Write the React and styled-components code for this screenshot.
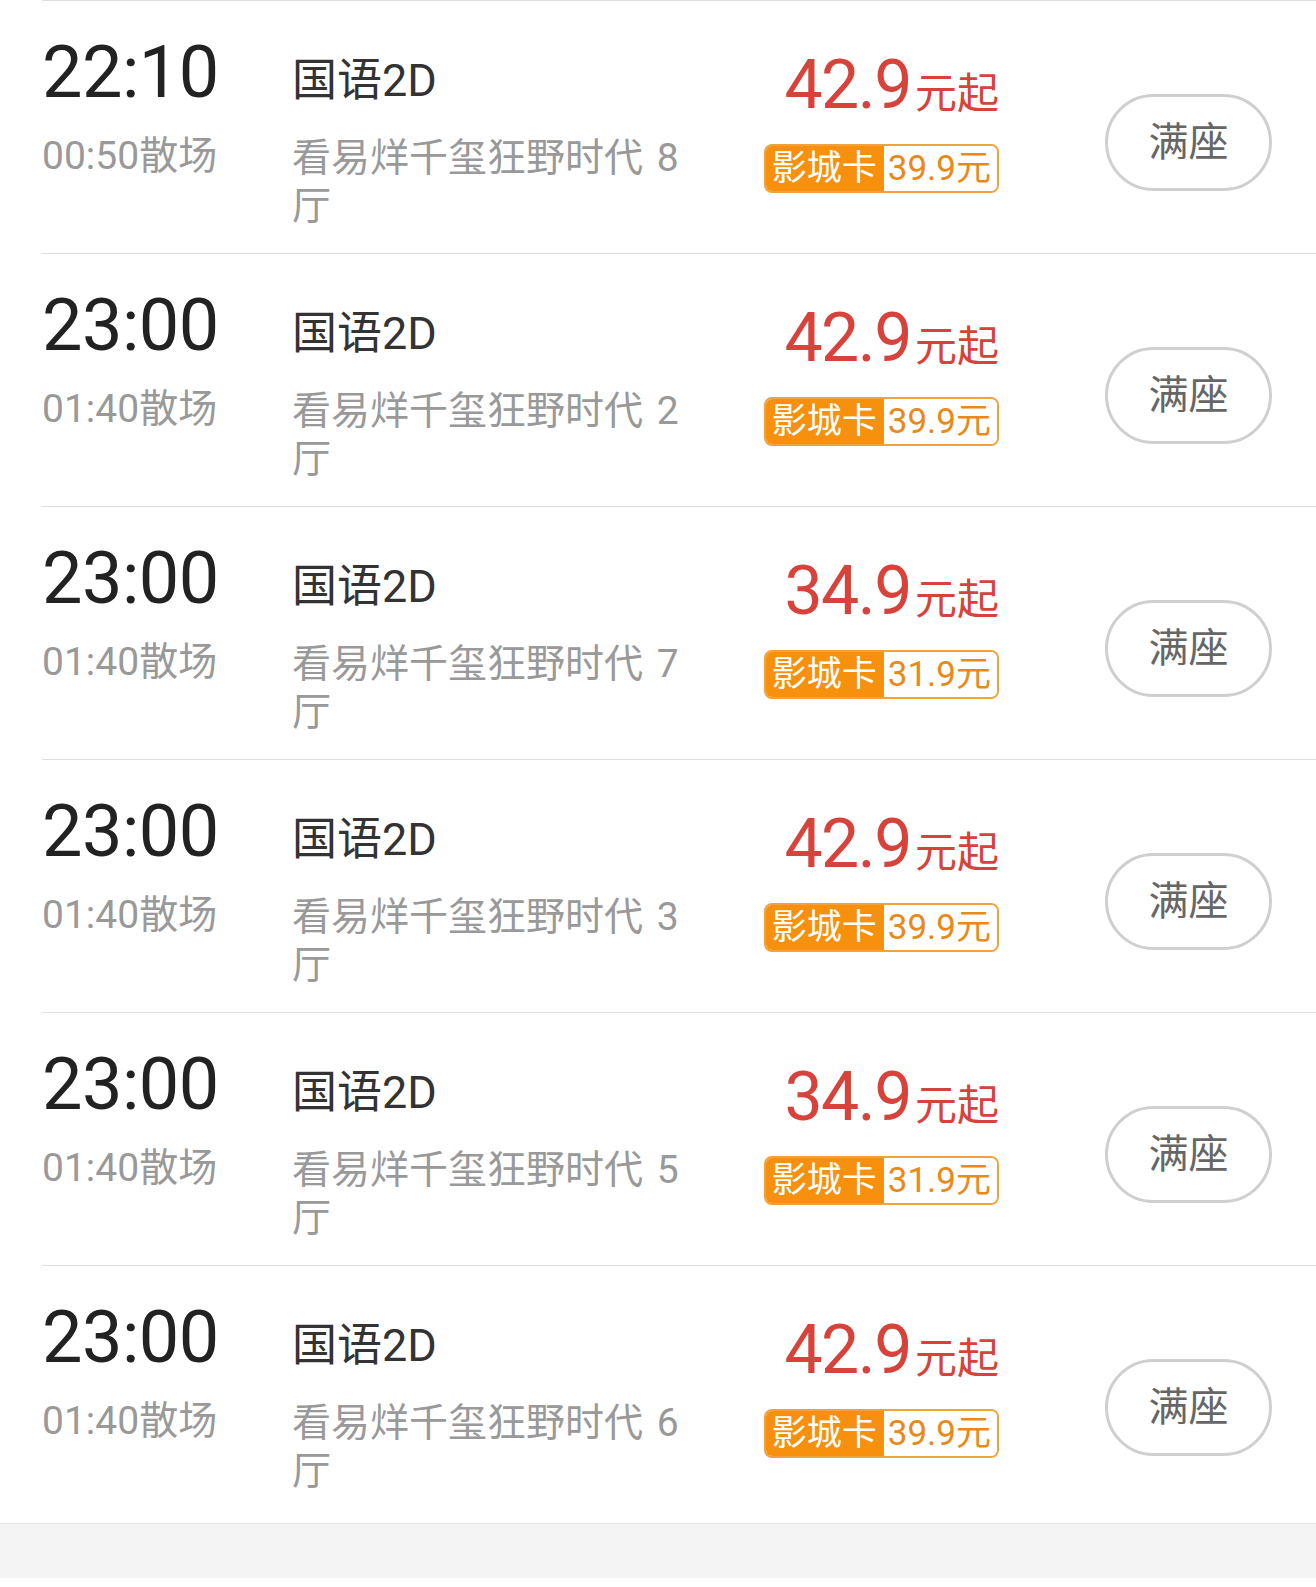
import styled, { createGlobalStyle } from 'styled-components';

const GlobalStyle = createGlobalStyle`
  html, body {
    margin: 0;
    padding: 0;
    background: #fff;
  }
  body {
    font-family: Roboto, 'Noto Sans CJK SC', sans-serif;
    -webkit-font-smoothing: antialiased;
  }
`;

const shows = [
  { start: '22:10', end: '00:50', hall: 8, price: '42.9', card: '39.9' },
  { start: '23:00', end: '01:40', hall: 2, price: '42.9', card: '39.9' },
  { start: '23:00', end: '01:40', hall: 7, price: '34.9', card: '31.9' },
  { start: '23:00', end: '01:40', hall: 3, price: '42.9', card: '39.9' },
  { start: '23:00', end: '01:40', hall: 5, price: '34.9', card: '31.9' },
  { start: '23:00', end: '01:40', hall: 6, price: '42.9', card: '39.9' },
];

const Page = styled.div`
  width: 1316px;
  background: #fff;
`;

const List = styled.ul`
  margin: 0;
  padding: 0;
  list-style: none;
`;

/* 场次 한 줄 */
const Row = styled.li`
  display: flex;
  align-items: flex-start;
  box-sizing: border-box;
  height: ${(p) => (p.$last ? '258px' : '253px')};
  margin-left: 42px;
  padding-top: 36px;
  border-top: 1px solid #dedede;
`;

const TimeCol = styled.div`
  display: flex;
  flex-direction: column;
  width: 250px;
  flex-shrink: 0;
`;

const StartTime = styled.div`
  font: 400 72px/72px Roboto, 'Noto Sans CJK SC', sans-serif;
  letter-spacing: -0.5px;
  color: #222;
`;

const EndTime = styled.div`
  margin-top: 24px;
  font: 400 39px/46px Roboto, 'Noto Sans CJK SC', sans-serif;
  color: #999;
`;

const InfoCol = styled.div`
  display: flex;
  flex-direction: column;
  width: 395px;
  flex-shrink: 0;
  padding-top: 18px;
`;

const Lang = styled.div`
  font: 400 45px/52px Roboto, 'Noto Sans CJK SC', sans-serif;
  color: #333;
`;

const Hall = styled.div`
  margin-top: 27px;
  font: 400 39px/48px Roboto, 'Noto Sans CJK SC', sans-serif;
  color: #999;
  .no {
    margin-left: 4px;
  }
`;

const PriceCol = styled.div`
  display: flex;
  flex: 1;
  flex-direction: column;
  align-items: flex-end;
  padding-top: 14px;
`;

const Price = styled.div`
  font: 400 68px/68px Roboto, 'Noto Sans CJK SC', sans-serif;
  color: #d7423b;
  white-space: nowrap;
  .num {
    letter-spacing: -1.5px;
  }
  .unit {
    margin-left: 4px;
    font-size: 42px;
    line-height: 1;
  }
`;

const Badge = styled.div`
  display: flex;
  box-sizing: border-box;
  height: 49px;
  margin-top: 25px;
  border: 2px solid #f2a23c;
  border-radius: 8px;
  overflow: hidden;
  font: 400 35px/45px Roboto, 'Noto Sans CJK SC', sans-serif;
  white-space: nowrap;
`;

const BadgeLabel = styled.span`
  padding: 0 7px 0 6px;
  background: #f7900c;
  color: #fff;
`;

const BadgeValue = styled.span`
  padding: 0 6px 0 4px;
  background: #fff;
  color: #e8891a;
`;

const FullButton = styled.button`
  flex-shrink: 0;
  box-sizing: border-box;
  width: 167px;
  height: 97px;
  margin: 57px 44px 0 106px;
  padding: 0;
  border: 3px solid #cfcfcf;
  border-radius: 50px;
  background: #fff;
  font: 400 40px/1 Roboto, 'Noto Sans CJK SC', sans-serif;
  color: #666;
`;

const Footer = styled.div`
  height: 54px;
  border-top: 1px solid #e6e6e6;
  background: #f4f4f4;
`;

const App = () => {
  return (
    <Page>
      <GlobalStyle />
      <List>
        {shows.map((s, i) => (
          <Row key={i} $last={i === shows.length - 1}>
            <TimeCol>
              <StartTime>{s.start}</StartTime>
              <EndTime>{s.end}散场</EndTime>
            </TimeCol>
            <InfoCol>
              <Lang>国语2D</Lang>
              <Hall>
                看易烊千玺狂野时代<span className='no'> {s.hall}</span>厅
              </Hall>
            </InfoCol>
            <PriceCol>
              <Price>
                <span className='num'>{s.price}</span>
                <span className='unit'>元起</span>
              </Price>
              <Badge>
                <BadgeLabel>影城卡</BadgeLabel>
                <BadgeValue>{s.card}元</BadgeValue>
              </Badge>
            </PriceCol>
            <FullButton>满座</FullButton>
          </Row>
        ))}
      </List>
      <Footer />
    </Page>
  );
};

export default App;
